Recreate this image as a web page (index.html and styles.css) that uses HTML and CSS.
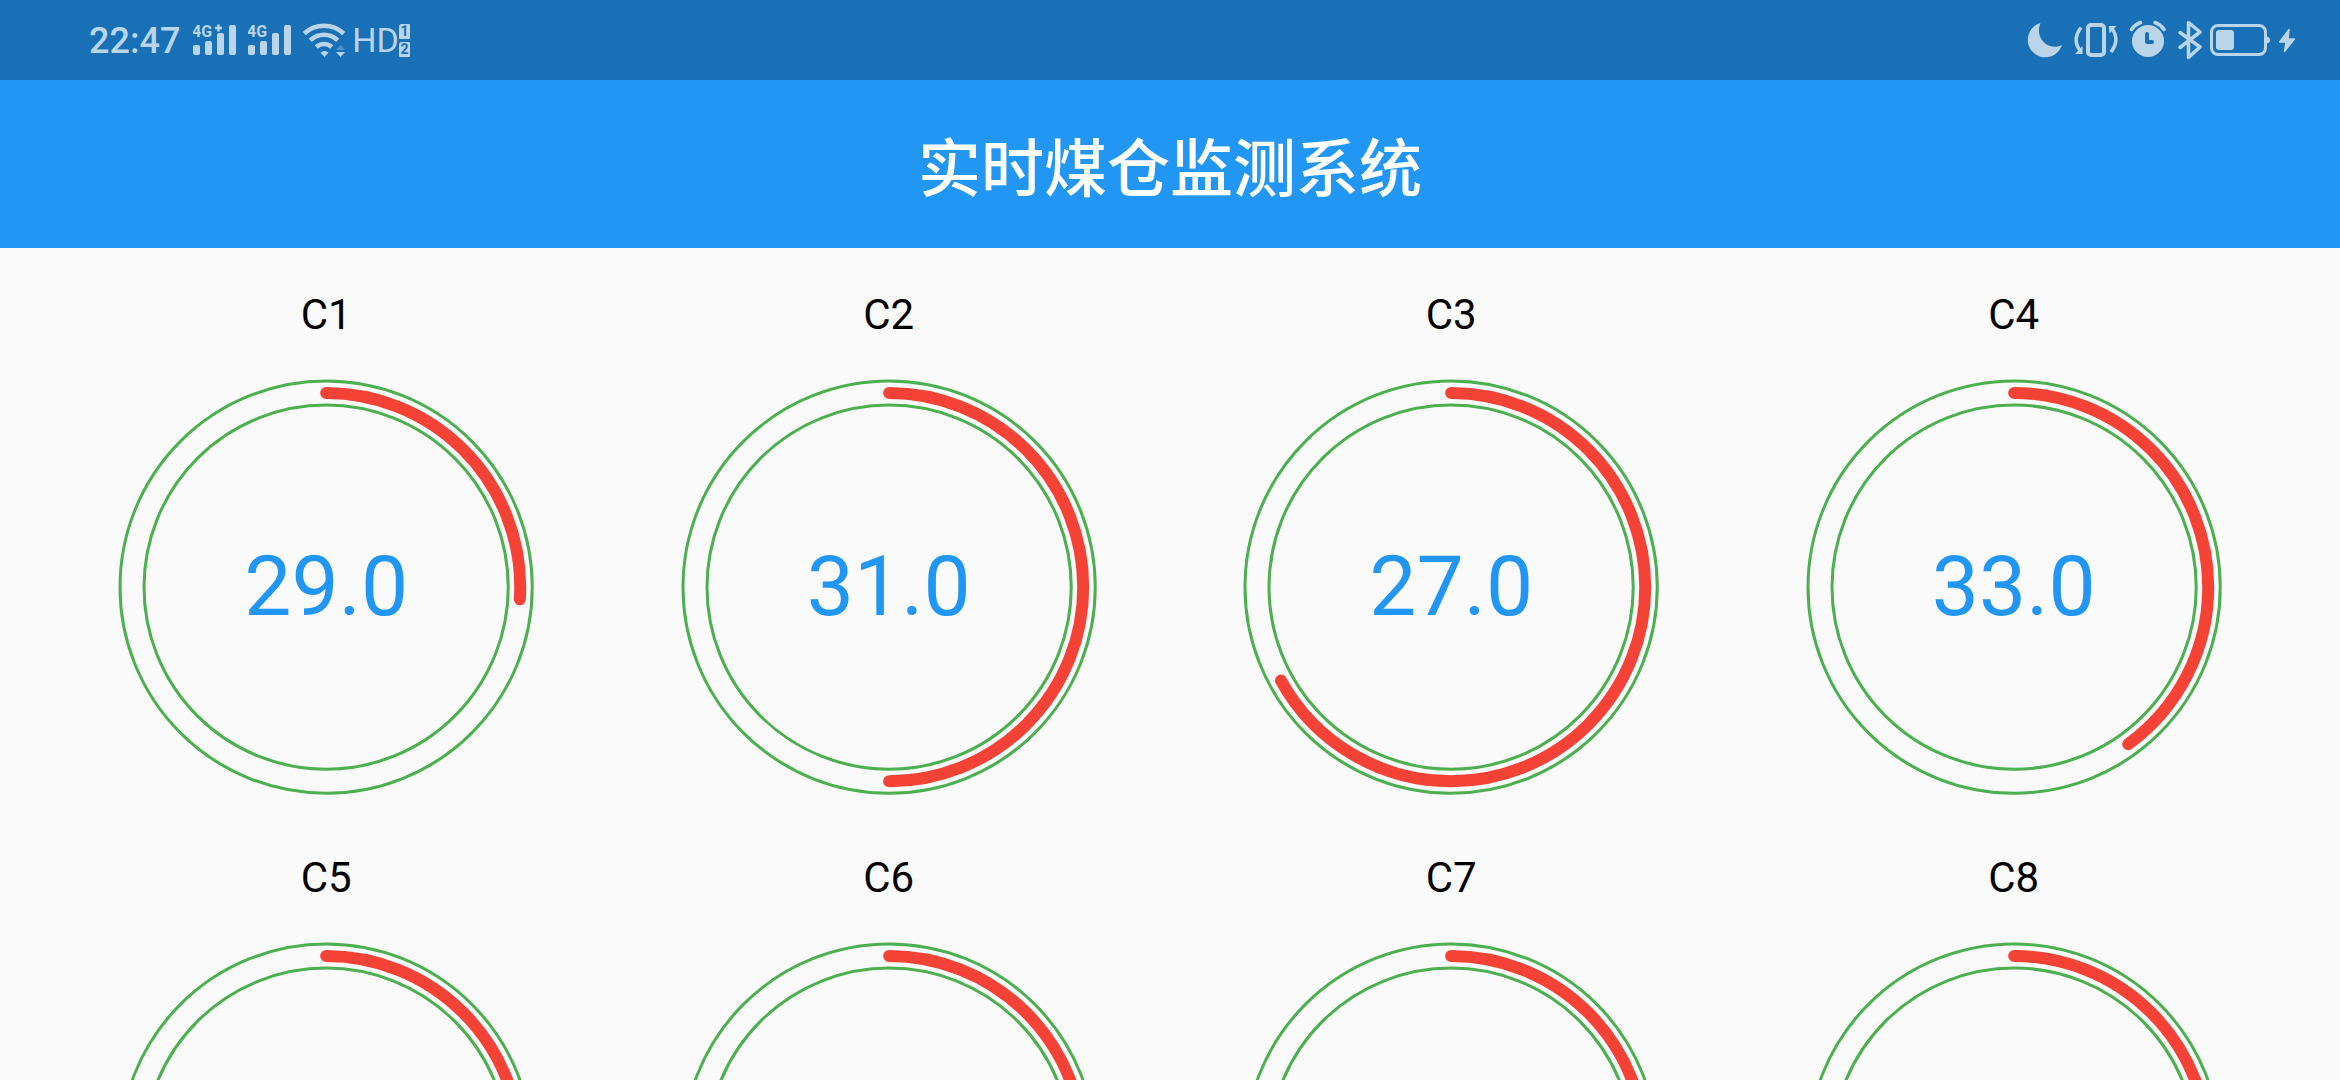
FILE: index.html
```html
<!DOCTYPE html>
<html lang="zh-CN">
<head>
<meta charset="utf-8">
<meta name="viewport" content="width=device-width, initial-scale=1">
<title>实时煤仓监测系统</title>
<link rel="stylesheet" href="styles.css">
</head>
<body>
<div class="app">
  <div class="status-bar">
    <div class="status-group">
      <time class="clock">22:47</time>
      <svg class="icon" width="45" height="40" viewBox="193 20 45 40">
        <text class="network" x="192" y="37">4G</text>
        <path d="M218.500 24.500v7M215 28h7" fill="none" stroke="currentColor" stroke-width="2.500"/>
        <rect x="193" y="45" width="7" height="10" rx="2"/>
        <rect x="205" y="41" width="7" height="14" rx="2"/>
        <rect x="217" y="33" width="7" height="22" rx="2"/>
        <rect x="229" y="25" width="7" height="30" rx="2"/>
      </svg>
      <svg class="icon" width="44" height="40" viewBox="248 20 44 40">
        <text class="network" x="247" y="37">4G</text>
        <rect x="248" y="45" width="7" height="10" rx="2"/>
        <rect x="260" y="41" width="7" height="14" rx="2"/>
        <rect x="272" y="33" width="7" height="22" rx="2"/>
        <rect x="284" y="25" width="7" height="30" rx="2"/>
      </svg>
      <svg class="icon" width="44" height="40" viewBox="302 20 44 40">
        <g fill="none" stroke="currentColor" stroke-width="4.500">
          <path d="M304.300 33.500a29 29 0 0 1 39.400 0"/>
          <path d="M310.300 40.300a20 20 0 0 1 27.400 0"/>
          <path d="M316.300 47a11.500 11.500 0 0 1 15.400 0"/>
        </g>
        <path d="M320.500 52.500q4.300-3 8 0L324.500 57z"/>
        <path d="M336 50l4.500-5 4.500 5z" opacity=".35"/>
        <path d="M336 52h9l-4.500 5z"/>
      </svg>
      <span class="hd">HD</span>
      <span class="sims"><b class="sim">1</b><b class="sim">2</b></span>
    </div>
    <div class="status-group status-group-end">
      <svg class="icon" width="38" height="40" viewBox="2026 20 38 40">
        <path d="M2040.500 23a17.500 17.500 0 1 0 21.500 22c-9 4.500-18 0-21.500-7.500-2.200-5-2-10 0-14.500z"/>
      </svg>
      <svg class="icon" width="48" height="40" viewBox="2072 20 48 40">
        <g fill="none" stroke="currentColor" stroke-width="3.500">
          <rect x="2088" y="25" width="16" height="30" rx="3" stroke-width="4"/>
          <path d="M2081 27.500q-9.500 12.500-.5 23.500M2111 52q9.500-12.500 .5-24"/>
        </g>
        <path d="M2082.500 46v8h-7.500zM2109 26h7.500l-7 7.500z"/>
      </svg>
      <svg class="icon" width="40" height="40" viewBox="2128 20 40 40">
        <circle cx="2148" cy="41" r="16"/>
        <path d="M2131.500 29.500q3.500-5 9-7M2155 22.500q5.500 2 9 7" fill="none" stroke="currentColor" stroke-width="3.500" stroke-linecap="round"/>
        <path class="hands" d="M2147 34v8h5" fill="none" stroke-width="4" stroke-linecap="round" stroke-linejoin="round"/>
      </svg>
      <svg class="icon" width="26" height="40" viewBox="2176 20 26 40">
        <path d="M2180 32.500l20 14.500-11.500 10.500V22.500L2200 32l-20 15.500" fill="none" stroke="currentColor" stroke-width="3.500" stroke-linecap="round" stroke-linejoin="round"/>
      </svg>
      <svg class="icon" width="61" height="40" viewBox="2210 20 61 40">
        <rect x="2211.500" y="25.500" width="54" height="29" rx="6.500" fill="none" stroke="currentColor" stroke-width="3"/>
        <rect x="2216" y="30" width="18" height="20" rx="3"/>
        <path d="M2267 36.500q3 .5 3 3.500t-3 3.500z"/>
      </svg>
      <svg class="icon" width="16" height="40" viewBox="2279 20 16 40">
        <path d="M2289 29.500L2279.500 42h6.500l-1.500 9.500L2294.500 39H2288z" stroke="currentColor" stroke-width="1.500" stroke-linejoin="round"/>
      </svg>
    </div>
  </div>

  <header class="app-bar">
    <h1 class="title">实时煤仓监测系统</h1>
  </header>

  <main class="bunkers">
    <section class="bunker">
      <h2 class="name">C1</h2>
      <div class="gauge">
        <svg class="dial" viewBox="0 0 416 416">
          <circle class="rim" cx="208" cy="208" r="206"/>
          <circle class="rim" cx="208" cy="208" r="182"/>
          <circle class="level" cx="208" cy="208" r="194" pathLength="100" stroke-dasharray="26 100"/>
        </svg>
        <span class="value">29.0</span>
      </div>
    </section>
    <section class="bunker">
      <h2 class="name">C2</h2>
      <div class="gauge">
        <svg class="dial" viewBox="0 0 416 416">
          <circle class="rim" cx="208" cy="208" r="206"/>
          <circle class="rim" cx="208" cy="208" r="182"/>
          <circle class="level" cx="208" cy="208" r="194" pathLength="100" stroke-dasharray="50 100"/>
        </svg>
        <span class="value">31.0</span>
      </div>
    </section>
    <section class="bunker">
      <h2 class="name">C3</h2>
      <div class="gauge">
        <svg class="dial" viewBox="0 0 416 416">
          <circle class="rim" cx="208" cy="208" r="206"/>
          <circle class="rim" cx="208" cy="208" r="182"/>
          <circle class="level" cx="208" cy="208" r="194" pathLength="100" stroke-dasharray="67 100"/>
        </svg>
        <span class="value">27.0</span>
      </div>
    </section>
    <section class="bunker">
      <h2 class="name">C4</h2>
      <div class="gauge">
        <svg class="dial" viewBox="0 0 416 416">
          <circle class="rim" cx="208" cy="208" r="206"/>
          <circle class="rim" cx="208" cy="208" r="182"/>
          <circle class="level" cx="208" cy="208" r="194" pathLength="100" stroke-dasharray="40 100"/>
        </svg>
        <span class="value">33.0</span>
      </div>
    </section>
    <section class="bunker">
      <h2 class="name">C5</h2>
      <div class="gauge">
        <svg class="dial" viewBox="0 0 416 416">
          <circle class="rim" cx="208" cy="208" r="206"/>
          <circle class="rim" cx="208" cy="208" r="182"/>
          <circle class="level" cx="208" cy="208" r="194" pathLength="100" stroke-dasharray="50 100"/>
        </svg>
      </div>
    </section>
    <section class="bunker">
      <h2 class="name">C6</h2>
      <div class="gauge">
        <svg class="dial" viewBox="0 0 416 416">
          <circle class="rim" cx="208" cy="208" r="206"/>
          <circle class="rim" cx="208" cy="208" r="182"/>
          <circle class="level" cx="208" cy="208" r="194" pathLength="100" stroke-dasharray="50 100"/>
        </svg>
      </div>
    </section>
    <section class="bunker">
      <h2 class="name">C7</h2>
      <div class="gauge">
        <svg class="dial" viewBox="0 0 416 416">
          <circle class="rim" cx="208" cy="208" r="206"/>
          <circle class="rim" cx="208" cy="208" r="182"/>
          <circle class="level" cx="208" cy="208" r="194" pathLength="100" stroke-dasharray="50 100"/>
        </svg>
      </div>
    </section>
    <section class="bunker">
      <h2 class="name">C8</h2>
      <div class="gauge">
        <svg class="dial" viewBox="0 0 416 416">
          <circle class="rim" cx="208" cy="208" r="206"/>
          <circle class="rim" cx="208" cy="208" r="182"/>
          <circle class="level" cx="208" cy="208" r="194" pathLength="100" stroke-dasharray="50 100"/>
        </svg>
      </div>
    </section>
  </main>
</div>
</body>
</html>
```
FILE: styles.css
```css
* {
  box-sizing: border-box;
}

body {
  margin: 0;
  background: #fafafa;
  color: #000;
  font-family: Roboto, "Noto Sans CJK SC", sans-serif;
}

.app {
  display: flex;
  flex-direction: column;
  height: 100vh;
}

/* System status bar */
.status-bar {
  display: flex;
  flex: none;
  align-items: center;
  justify-content: space-between;
  height: 80px;
  padding: 0 45px 0 89px;
  background: #1970b6;
  color: #bad4e9;
}

.status-group {
  display: flex;
  align-items: center;
  gap: 10px;
}

.status-group-end {
  gap: 8px;
}

.clock {
  margin-right: 3px;
  padding-top: 2px;
  font-size: 36px;
  font-weight: 500;
  line-height: 40px;
}

.icon {
  display: block;
  flex: none;
  fill: currentColor;
}

.network {
  font-size: 16px;
  font-weight: 700;
}

.hands {
  stroke: #1970b6;
}

.hd {
  margin-left: -4px;
  font-size: 34px;
  line-height: 40px;
}

.sims {
  display: flex;
  flex-direction: column;
  gap: 3px;
  margin-left: -10px;
}

.sim {
  width: 11px;
  height: 15px;
  border-radius: 3px 1px 1px 1px;
  background: #bad4e9;
  color: #1970b6;
  font-size: 14px;
  line-height: 15px;
  text-align: center;
}

/* Title bar */
.app-bar {
  display: flex;
  flex: none;
  align-items: center;
  justify-content: center;
  height: 168px;
  background: #2196f3;
  color: #fff;
}

.title {
  margin: 0;
  font-family: "Noto Sans CJK SC", sans-serif;
  font-size: 63px;
  font-weight: 500;
  line-height: 84px;
}

/* Gauge grid */
.bunkers {
  display: grid;
  flex: 1;
  grid-template-columns: repeat(4, 1fr);
  align-content: start;
  min-height: 0;
  padding: 0 45px;
  overflow-y: auto;
  scrollbar-width: none;
}

.bunker {
  display: flex;
  flex-direction: column;
  align-items: center;
  gap: 40px;
  aspect-ratio: 1;
  padding-top: 43px;
}

.name {
  margin: 0;
  font-size: 42px;
  font-weight: 400;
  line-height: 48px;
}

.gauge {
  display: grid;
  place-items: center;
  width: 74%;
}

.dial,
.value {
  grid-area: 1 / 1;
}

.dial {
  display: block;
  width: 100%;
  overflow: visible;
  fill: none;
}

.rim {
  stroke: #4caf50;
  stroke-width: 3;
}

.level {
  stroke: #f44336;
  stroke-width: 12;
  stroke-linecap: round;
  transform: rotate(-90deg);
  transform-origin: center;
}

.value {
  color: #2196f3;
  font-size: 84px;
  line-height: 98px;
}
```
